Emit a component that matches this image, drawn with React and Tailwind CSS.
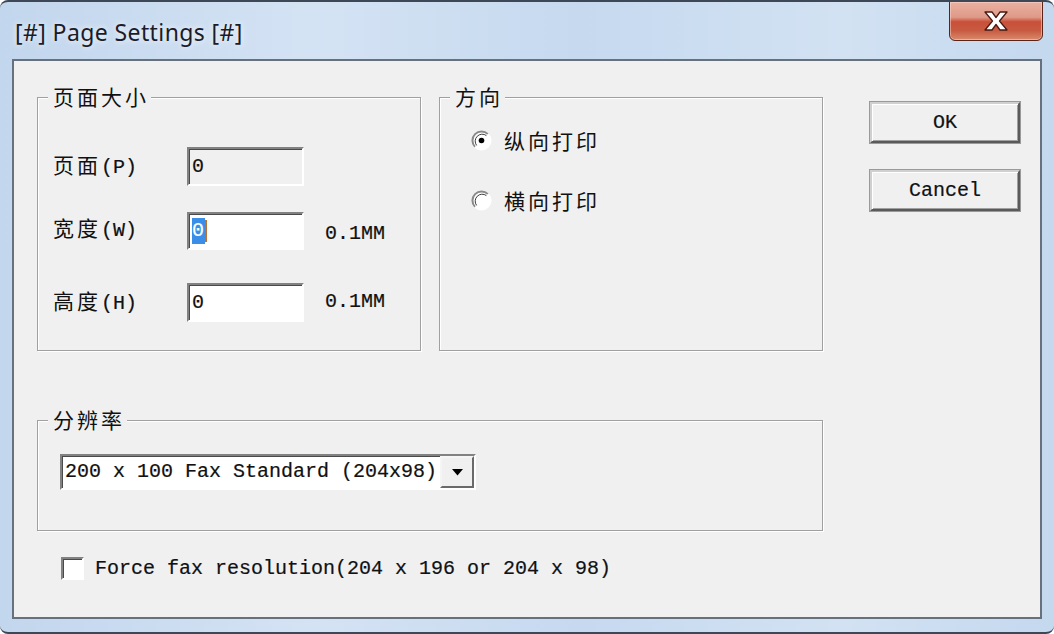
import React from "react";

const mono = "font-['Liberation_Mono','Noto_Sans_CJK_SC',monospace] text-[20px] leading-none text-[#111] [-webkit-text-stroke:0.2px_currentColor]";
const cjk = "font-['Noto_Sans_CJK_SC',sans-serif] text-[21px] tracking-[3px] leading-none";

function Cn({ children }) {
  return <span className={cjk}>{children}</span>;
}

function GroupBox({ title, className = "", children }) {
  return (
    <div
      className={
        "relative border border-[#a0a0a0] shadow-[inset_1px_1px_0_#ffffff,1px_1px_0_#ffffff] " +
        className
      }
    >
      <div className="absolute -top-[12px] left-[10px] bg-[#f0f0f0] pl-[5px] pr-[2px] text-[#111]">
        <Cn>{title}</Cn>
      </div>
      {children}
    </div>
  );
}

function Sunken({ className = "", children }) {
  return (
    <div
      className={
        "border-2 border-t-[#828282] border-l-[#828282] border-b-[#ffffff] border-r-[#ffffff] shadow-[inset_1px_1px_0_#4a4a4a] " +
        className
      }
    >
      {children}
    </div>
  );
}

function Radio({ checked }) {
  return (
    <svg width="21" height="21" viewBox="0 0 21 21">
      <circle cx="10.5" cy="10.5" r="9" fill="#ffffff" />
      <path d="M4.1 16.9 A9 9 0 0 1 16.9 4.1" stroke="#8a8a8a" strokeWidth="2" fill="none" />
      <path d="M5.6 15.4 A7 7 0 0 1 15.4 5.6" stroke="#3c3c3c" strokeWidth="1" fill="none" />
      <path d="M16.9 4.1 A9 9 0 0 1 4.1 16.9" stroke="#ffffff" strokeWidth="2" fill="none" />
      {checked && <circle cx="10.5" cy="10.5" r="2.8" fill="#000" />}
    </svg>
  );
}

function Button({ children }) {
  return (
    <div className="w-[150px] h-[41px] border-2 border-t-[#d0d0d0] border-l-[#d0d0d0] border-b-[#5a5a5a] border-r-[#5a5a5a] shadow-[inset_1px_1px_0_#ffffff,inset_-1px_-1px_0_#a0a0a0,0_0_0_1px_#9a9a9a] bg-[#f0f0f0] flex items-center justify-center">
      <span className={mono}>{children}</span>
    </div>
  );
}

export default function App() {
  return (
    <div className="w-[1054px] h-[634px] flex flex-col overflow-hidden rounded-[8px] border-t-2 border-b-2 border-[#3d4756] bg-[linear-gradient(90deg,#c2d6ed_0%,#d4e3f4_30%,#c6d9ef_55%,#d2e2f3_80%,#c4d8ee_100%)]">
      {/* Title bar */}
      <div className="h-[57px] flex items-start justify-between pl-[15px] pr-[11px]">
        <div className="pt-[19px] font-['Noto_Sans',sans-serif] text-[23px] tracking-[0.4px] leading-none text-[#1b1b2a] [text-shadow:0_0_6px_#ffffff]">
          [#] Page Settings [#]
        </div>
        <div className="w-[94px] h-[40px] -mt-[1px] rounded-b-[6px] border border-[#5a2418] bg-[linear-gradient(180deg,#eab0a2_0%,#df9a88_40%,#c9503a_52%,#c75a40_75%,#d98a6f_100%)] shadow-[inset_0_0_0_1px_rgba(255,220,210,0.5)] flex items-center justify-center">
          <svg width="28" height="22" viewBox="0 0 28 22">
            <path
              d="M3 2 H10 L14 7.5 L18 2 H25 L17.5 11 L25 20 H18 L14 14.5 L10 20 H3 L10.5 11 Z"
              fill="#ffffff"
              stroke="#4a1a12"
              strokeWidth="1.3"
              strokeLinejoin="round"
            />
          </svg>
        </div>
      </div>

      {/* Client area */}
      <div className="mx-[12px] h-[560px] border-2 border-[#66717d] bg-[#f0f0f0] flex pl-[23px] pt-[36px]">
        <div className="w-[786px] flex flex-col">
          <div className="flex gap-[18px]">
            <GroupBox title="页面大小" className="w-[384px] h-[254px]">
              <div className="flex flex-col pl-[15px] pt-[49px]">
                <div className="flex items-center h-[39px]">
                  <div className="w-[134px] text-[#111]">
                    <Cn>页面</Cn>
                    <span className={mono}>(P)</span>
                  </div>
                  <Sunken className="w-[117px] h-[39px] bg-[#f0f0f0] flex items-center pl-[3px]">
                    <span className={mono + " text-[#7a7a7a]"}>0</span>
                  </Sunken>
                </div>
                <div className="flex items-center h-[38px] mt-[26px]">
                  <div className="w-[134px] text-[#111] -mt-[4px]">
                    <Cn>宽度</Cn>
                    <span className={mono}>(W)</span>
                  </div>
                  <Sunken className="w-[117px] h-[38px] bg-white flex items-center pl-[3px]">
                    <span className={mono + " bg-[#3a8ee8] text-white py-[3px] pr-[1px]"}>0</span>
                    <span className="w-[2px] h-[22px] bg-[#c07030]" />
                  </Sunken>
                  <span className={mono + " ml-[21px] mt-[6px]"}>0.1MM</span>
                </div>
                <div className="flex items-center h-[39px] mt-[33px]">
                  <div className="w-[134px] text-[#111]">
                    <Cn>高度</Cn>
                    <span className={mono}>(H)</span>
                  </div>
                  <Sunken className="w-[117px] h-[39px] bg-white flex items-center pl-[3px]">
                    <span className={mono}>0</span>
                  </Sunken>
                  <span className={mono + " ml-[21px] -mt-[2px]"}>0.1MM</span>
                </div>
              </div>
            </GroupBox>

            <GroupBox title="方向" className="w-[384px] h-[254px]">
              <div className="flex flex-col pl-[31px] pt-[32px]">
                <div className="flex items-center h-[21px] gap-[12px]">
                  <Radio checked />
                  <span className={cjk + " text-[#111]"}>纵向打印</span>
                </div>
                <div className="flex items-center h-[21px] gap-[12px] mt-[39px]">
                  <Radio />
                  <span className={cjk + " text-[#111]"}>横向打印</span>
                </div>
              </div>
            </GroupBox>
          </div>

          <GroupBox title="分辨率" className="w-[786px] h-[111px] mt-[69px]">
            <div className="pl-[22px] pt-[33px]">
              <Sunken className="w-[416px] h-[36px] bg-white flex items-center">
                <span className={mono + " flex-1 pl-[3px]"}>200 x 100 Fax Standard (204x98)</span>
                <div className="w-[34px] h-full bg-[#f0f0f0] border-2 border-t-[#f5f5f5] border-l-[#f5f5f5] border-b-[#6a6a6a] border-r-[#6a6a6a] flex items-center justify-center">
                  <svg width="11" height="7" viewBox="0 0 11 7">
                    <path d="M0 0 H11 L5.5 6.5 Z" fill="#000" />
                  </svg>
                </div>
              </Sunken>
            </div>
          </GroupBox>

          <div className="flex items-center mt-[26px] pl-[24px] gap-[11px]">
            <Sunken className="w-[23px] h-[23px] bg-white" />
            <span className={mono}>Force fax resolution(204 x 196 or 204 x 98)</span>
          </div>
        </div>

        <div className="flex flex-col ml-[47px] mt-[5px] gap-[27px]">
          <Button>OK</Button>
          <Button>Cancel</Button>
        </div>
      </div>
    </div>
  );
}
